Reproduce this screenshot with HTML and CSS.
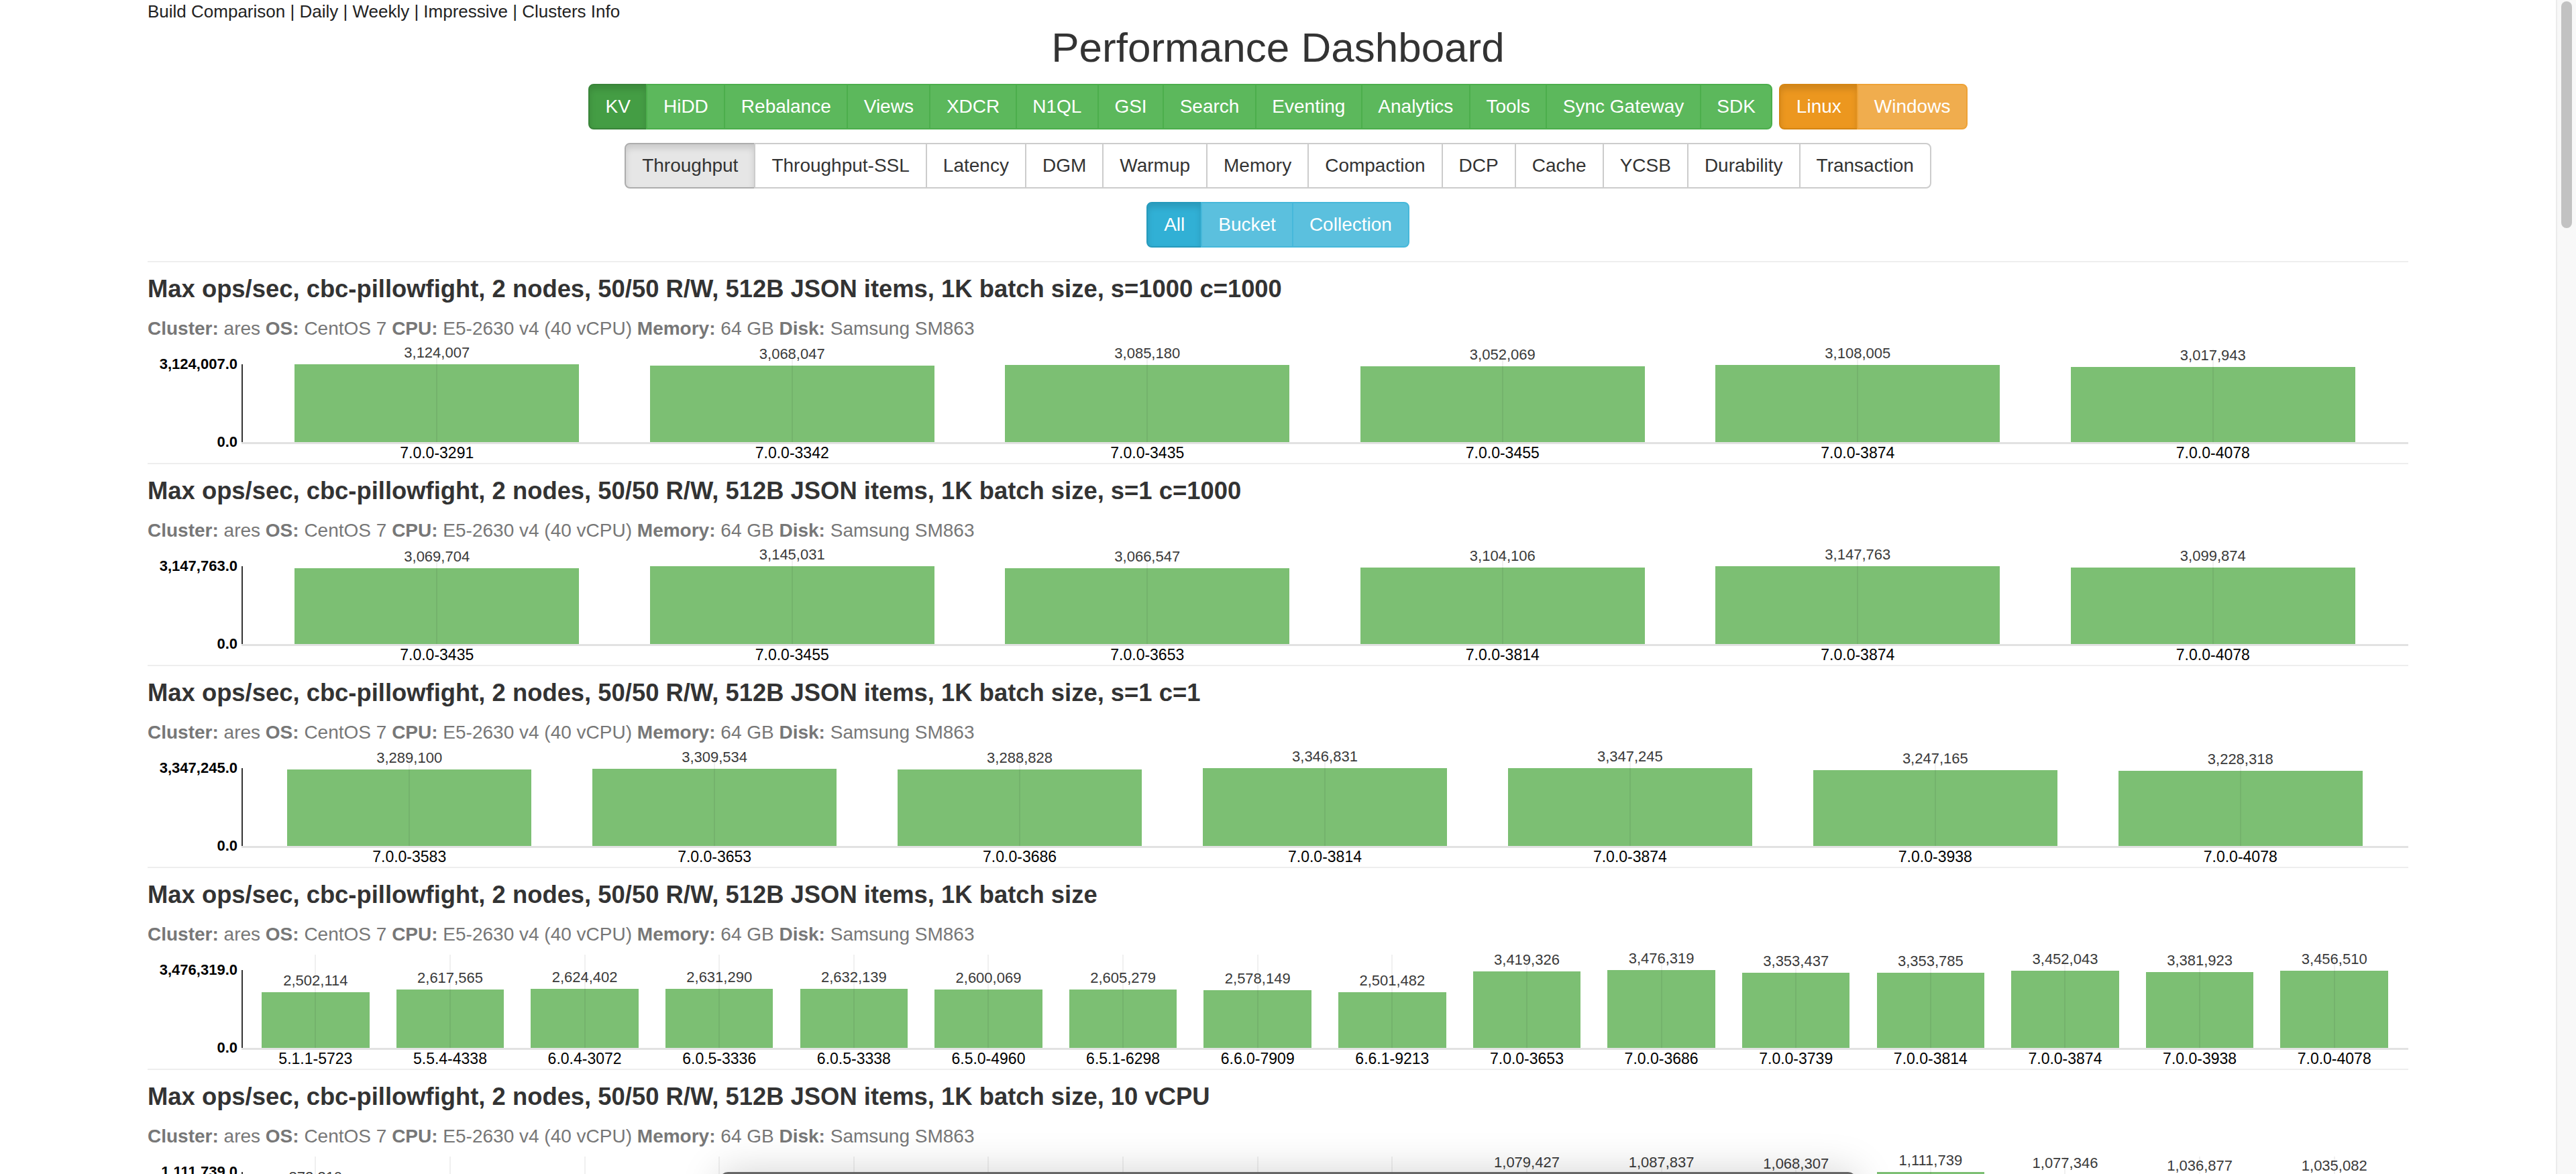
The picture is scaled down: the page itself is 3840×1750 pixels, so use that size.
FILE: index.html
```html
<!DOCTYPE html>
<html lang="en">
<head>
<meta charset="utf-8">
<title>Performance Dashboard</title>
<link rel="stylesheet" href="styles.css">
</head>
<body>
<div class="app">
  <main class="page">
    <div class="toplinks">Build Comparison | Daily | Weekly | Impressive | Clusters Info</div>
    <h1 class="title">Performance Dashboard</h1>

    <div class="toolbar">
      <div class="btn-group success">
        <span class="btn active">KV</span><span class="btn">HiDD</span><span class="btn">Rebalance</span><span class="btn">Views</span><span class="btn">XDCR</span><span class="btn">N1QL</span><span class="btn">GSI</span><span class="btn">Search</span><span class="btn">Eventing</span><span class="btn">Analytics</span><span class="btn">Tools</span><span class="btn">Sync Gateway</span><span class="btn">SDK</span>
      </div>
      <div class="btn-group warning">
        <span class="btn active">Linux</span><span class="btn">Windows</span>
      </div>
    </div>

    <div class="toolbar">
      <div class="btn-group default">
        <span class="btn active">Throughput</span><span class="btn">Throughput-SSL</span><span class="btn">Latency</span><span class="btn">DGM</span><span class="btn">Warmup</span><span class="btn">Memory</span><span class="btn">Compaction</span><span class="btn">DCP</span><span class="btn">Cache</span><span class="btn">YCSB</span><span class="btn">Durability</span><span class="btn">Transaction</span>
      </div>
    </div>

    <div class="toolbar">
      <div class="btn-group info">
        <span class="btn active">All</span><span class="btn">Bucket</span><span class="btn">Collection</span>
      </div>
    </div>

    <section class="panel">
      <h4 class="panel-title">Max ops/sec, cbc-pillowfight, 2 nodes, 50/50 R/W, 512B JSON items, 1K batch size, s=1000 c=1000</h4>
      <div class="meta"><b>Cluster:</b> ares <b>OS:</b> CentOS 7 <b>CPU:</b> E5-2630 v4 (40 vCPU) <b>Memory:</b> 64 GB <b>Disk:</b> Samsung SM863</div>
      <div class="chart" style="--max:3124007">
        <div class="yaxis"><span>3,124,007.0</span><span>0.0</span></div>
        <div class="plot">
          <div class="col"><div class="stack"><span class="val">3,124,007</span><div class="bar" style="--v:3124007"></div></div><div class="xl">7.0.0-3291</div></div>
          <div class="col"><div class="stack"><span class="val">3,068,047</span><div class="bar" style="--v:3068047"></div></div><div class="xl">7.0.0-3342</div></div>
          <div class="col"><div class="stack"><span class="val">3,085,180</span><div class="bar" style="--v:3085180"></div></div><div class="xl">7.0.0-3435</div></div>
          <div class="col"><div class="stack"><span class="val">3,052,069</span><div class="bar" style="--v:3052069"></div></div><div class="xl">7.0.0-3455</div></div>
          <div class="col"><div class="stack"><span class="val">3,108,005</span><div class="bar" style="--v:3108005"></div></div><div class="xl">7.0.0-3874</div></div>
          <div class="col"><div class="stack"><span class="val">3,017,943</span><div class="bar" style="--v:3017943"></div></div><div class="xl">7.0.0-4078</div></div>
        </div>
      </div>
    </section>

    <section class="panel">
      <h4 class="panel-title">Max ops/sec, cbc-pillowfight, 2 nodes, 50/50 R/W, 512B JSON items, 1K batch size, s=1 c=1000</h4>
      <div class="meta"><b>Cluster:</b> ares <b>OS:</b> CentOS 7 <b>CPU:</b> E5-2630 v4 (40 vCPU) <b>Memory:</b> 64 GB <b>Disk:</b> Samsung SM863</div>
      <div class="chart" style="--max:3147763">
        <div class="yaxis"><span>3,147,763.0</span><span>0.0</span></div>
        <div class="plot">
          <div class="col"><div class="stack"><span class="val">3,069,704</span><div class="bar" style="--v:3069704"></div></div><div class="xl">7.0.0-3435</div></div>
          <div class="col"><div class="stack"><span class="val">3,145,031</span><div class="bar" style="--v:3145031"></div></div><div class="xl">7.0.0-3455</div></div>
          <div class="col"><div class="stack"><span class="val">3,066,547</span><div class="bar" style="--v:3066547"></div></div><div class="xl">7.0.0-3653</div></div>
          <div class="col"><div class="stack"><span class="val">3,104,106</span><div class="bar" style="--v:3104106"></div></div><div class="xl">7.0.0-3814</div></div>
          <div class="col"><div class="stack"><span class="val">3,147,763</span><div class="bar" style="--v:3147763"></div></div><div class="xl">7.0.0-3874</div></div>
          <div class="col"><div class="stack"><span class="val">3,099,874</span><div class="bar" style="--v:3099874"></div></div><div class="xl">7.0.0-4078</div></div>
        </div>
      </div>
    </section>

    <section class="panel">
      <h4 class="panel-title">Max ops/sec, cbc-pillowfight, 2 nodes, 50/50 R/W, 512B JSON items, 1K batch size, s=1 c=1</h4>
      <div class="meta"><b>Cluster:</b> ares <b>OS:</b> CentOS 7 <b>CPU:</b> E5-2630 v4 (40 vCPU) <b>Memory:</b> 64 GB <b>Disk:</b> Samsung SM863</div>
      <div class="chart" style="--max:3347245">
        <div class="yaxis"><span>3,347,245.0</span><span>0.0</span></div>
        <div class="plot">
          <div class="col"><div class="stack"><span class="val">3,289,100</span><div class="bar" style="--v:3289100"></div></div><div class="xl">7.0.0-3583</div></div>
          <div class="col"><div class="stack"><span class="val">3,309,534</span><div class="bar" style="--v:3309534"></div></div><div class="xl">7.0.0-3653</div></div>
          <div class="col"><div class="stack"><span class="val">3,288,828</span><div class="bar" style="--v:3288828"></div></div><div class="xl">7.0.0-3686</div></div>
          <div class="col"><div class="stack"><span class="val">3,346,831</span><div class="bar" style="--v:3346831"></div></div><div class="xl">7.0.0-3814</div></div>
          <div class="col"><div class="stack"><span class="val">3,347,245</span><div class="bar" style="--v:3347245"></div></div><div class="xl">7.0.0-3874</div></div>
          <div class="col"><div class="stack"><span class="val">3,247,165</span><div class="bar" style="--v:3247165"></div></div><div class="xl">7.0.0-3938</div></div>
          <div class="col"><div class="stack"><span class="val">3,228,318</span><div class="bar" style="--v:3228318"></div></div><div class="xl">7.0.0-4078</div></div>
        </div>
      </div>
    </section>

    <section class="panel">
      <h4 class="panel-title">Max ops/sec, cbc-pillowfight, 2 nodes, 50/50 R/W, 512B JSON items, 1K batch size</h4>
      <div class="meta"><b>Cluster:</b> ares <b>OS:</b> CentOS 7 <b>CPU:</b> E5-2630 v4 (40 vCPU) <b>Memory:</b> 64 GB <b>Disk:</b> Samsung SM863</div>
      <div class="chart" style="--max:3476319">
        <div class="yaxis"><span>3,476,319.0</span><span>0.0</span></div>
        <div class="plot">
          <div class="col"><div class="stack"><span class="val">2,502,114</span><div class="bar" style="--v:2502114"></div></div><div class="xl">5.1.1-5723</div></div>
          <div class="col"><div class="stack"><span class="val">2,617,565</span><div class="bar" style="--v:2617565"></div></div><div class="xl">5.5.4-4338</div></div>
          <div class="col"><div class="stack"><span class="val">2,624,402</span><div class="bar" style="--v:2624402"></div></div><div class="xl">6.0.4-3072</div></div>
          <div class="col"><div class="stack"><span class="val">2,631,290</span><div class="bar" style="--v:2631290"></div></div><div class="xl">6.0.5-3336</div></div>
          <div class="col"><div class="stack"><span class="val">2,632,139</span><div class="bar" style="--v:2632139"></div></div><div class="xl">6.0.5-3338</div></div>
          <div class="col"><div class="stack"><span class="val">2,600,069</span><div class="bar" style="--v:2600069"></div></div><div class="xl">6.5.0-4960</div></div>
          <div class="col"><div class="stack"><span class="val">2,605,279</span><div class="bar" style="--v:2605279"></div></div><div class="xl">6.5.1-6298</div></div>
          <div class="col"><div class="stack"><span class="val">2,578,149</span><div class="bar" style="--v:2578149"></div></div><div class="xl">6.6.0-7909</div></div>
          <div class="col"><div class="stack"><span class="val">2,501,482</span><div class="bar" style="--v:2501482"></div></div><div class="xl">6.6.1-9213</div></div>
          <div class="col"><div class="stack"><span class="val">3,419,326</span><div class="bar" style="--v:3419326"></div></div><div class="xl">7.0.0-3653</div></div>
          <div class="col"><div class="stack"><span class="val">3,476,319</span><div class="bar" style="--v:3476319"></div></div><div class="xl">7.0.0-3686</div></div>
          <div class="col"><div class="stack"><span class="val">3,353,437</span><div class="bar" style="--v:3353437"></div></div><div class="xl">7.0.0-3739</div></div>
          <div class="col"><div class="stack"><span class="val">3,353,785</span><div class="bar" style="--v:3353785"></div></div><div class="xl">7.0.0-3814</div></div>
          <div class="col"><div class="stack"><span class="val">3,452,043</span><div class="bar" style="--v:3452043"></div></div><div class="xl">7.0.0-3874</div></div>
          <div class="col"><div class="stack"><span class="val">3,381,923</span><div class="bar" style="--v:3381923"></div></div><div class="xl">7.0.0-3938</div></div>
          <div class="col"><div class="stack"><span class="val">3,456,510</span><div class="bar" style="--v:3456510"></div></div><div class="xl">7.0.0-4078</div></div>
        </div>
      </div>
    </section>

    <section class="panel">
      <h4 class="panel-title">Max ops/sec, cbc-pillowfight, 2 nodes, 50/50 R/W, 512B JSON items, 1K batch size, 10 vCPU</h4>
      <div class="meta"><b>Cluster:</b> ares <b>OS:</b> CentOS 7 <b>CPU:</b> E5-2630 v4 (40 vCPU) <b>Memory:</b> 64 GB <b>Disk:</b> Samsung SM863</div>
      <div class="chart" style="--max:1111739">
        <div class="yaxis"><span>1,111,739.0</span><span>0.0</span></div>
        <div class="plot">
          <div class="col"><div class="stack"><span class="val">872,310</span><div class="bar" style="--v:872310"></div></div><div class="xl">5.1.1-5723</div></div>
          <div class="col"><div class="stack"><span class="val">801,245</span><div class="bar" style="--v:801245"></div></div><div class="xl">5.5.4-4338</div></div>
          <div class="col"><div class="stack"><span class="val">812,604</span><div class="bar" style="--v:812604"></div></div><div class="xl">6.0.4-3072</div></div>
          <div class="col"><div class="stack"><span class="val">806,377</span><div class="bar" style="--v:806377"></div></div><div class="xl">6.0.5-3336</div></div>
          <div class="col"><div class="stack"><span class="val">815,902</span><div class="bar" style="--v:815902"></div></div><div class="xl">6.0.5-3338</div></div>
          <div class="col"><div class="stack"><span class="val">798,113</span><div class="bar" style="--v:798113"></div></div><div class="xl">6.5.0-4960</div></div>
          <div class="col"><div class="stack"><span class="val">804,556</span><div class="bar" style="--v:804556"></div></div><div class="xl">6.5.1-6298</div></div>
          <div class="col"><div class="stack"><span class="val">790,218</span><div class="bar" style="--v:790218"></div></div><div class="xl">6.6.0-7909</div></div>
          <div class="col"><div class="stack"><span class="val">781,930</span><div class="bar" style="--v:781930"></div></div><div class="xl">6.6.1-9213</div></div>
          <div class="col"><div class="stack"><span class="val">1,079,427</span><div class="bar" style="--v:1079427"></div></div><div class="xl">7.0.0-3653</div></div>
          <div class="col"><div class="stack"><span class="val">1,087,837</span><div class="bar" style="--v:1087837"></div></div><div class="xl">7.0.0-3686</div></div>
          <div class="col"><div class="stack"><span class="val">1,068,307</span><div class="bar" style="--v:1068307"></div></div><div class="xl">7.0.0-3739</div></div>
          <div class="col"><div class="stack"><span class="val">1,111,739</span><div class="bar" style="--v:1111739"></div></div><div class="xl">7.0.0-3814</div></div>
          <div class="col"><div class="stack"><span class="val">1,077,346</span><div class="bar" style="--v:1077346"></div></div><div class="xl">7.0.0-3874</div></div>
          <div class="col"><div class="stack"><span class="val">1,036,877</span><div class="bar" style="--v:1036877"></div></div><div class="xl">7.0.0-3938</div></div>
          <div class="col"><div class="stack"><span class="val">1,035,082</span><div class="bar" style="--v:1035082"></div></div><div class="xl">7.0.0-4078</div></div>
        </div>
      </div>
    </section>
  </main>
  <div class="scrollbar"><div class="thumb"></div></div>
  <div class="overlay"></div>
</div>
</body>
</html>
```

FILE: styles.css
```css
html, body {
  margin: 0;
  height: 1750px;
  overflow: hidden;
  background: #fff;
}

body {
  font-family: "Liberation Sans", Arial, Helvetica, sans-serif;
  font-size: 28px;
  line-height: 40px;
  color: #333;
}

.app {
  display: flex;
  height: 1750px;
  position: relative;
  overflow: hidden;
}

.page {
  flex: 1;
  min-width: 0;
  padding: 0 220px;
}

/* top links */
.toplinks {
  font-size: 26px;
  line-height: 34px;
  color: #222;
}

.title {
  margin: 3px 0 0;
  font-size: 62px;
  line-height: 68px;
  font-weight: 400;
  text-align: center;
  color: #333;
}

/* button toolbars */
.toolbar {
  display: flex;
  justify-content: center;
  gap: 10px;
  margin-top: 20px;
}

.btn-group {
  display: flex;
}

.btn {
  display: block;
  font-size: 28px;
  line-height: 40px;
  padding: 12px 23.5px;
  border: 2px solid transparent;
  margin-left: -2px;
  white-space: nowrap;
  color: #fff;
}

.btn:first-child {
  margin-left: 0;
  border-radius: 8px 0 0 8px;
}

.btn:last-child {
  border-radius: 0 8px 8px 0;
}

.btn.active {
  box-shadow: inset 0 6px 10px rgba(0, 0, 0, 0.125);
}

.success .btn { background: #5cb85c; border-color: #4cae4c; }
.success .btn.active { background: #449d44; border-color: #398439; }

.warning .btn { background: #f0ad4e; border-color: #eea236; }
.warning .btn.active { background: #ec971f; border-color: #d58512; }

.default .btn { background: #fff; border-color: #ccc; color: #333; padding: 12px 24px; }
.default .btn.active { background: #e6e6e6; border-color: #adadad; }

.info .btn { background: #5bc0de; border-color: #46b8da; padding: 12px 24px; }
.info .btn.active { background: #31b0d5; border-color: #269abc; }

/* chart panels */
.panel {
  margin-top: 20px;
  border-top: 2px solid #eee;
  padding: 20px 0 3px;
}

.panel + .panel {
  margin-top: 0;
}

.panel-title {
  margin: 0;
  font-size: 36.4px;
  line-height: 40px;
  font-weight: 700;
  color: #333;
}

.meta {
  margin-top: 19px;
  font-size: 28px;
  line-height: 40px;
  color: #777;
}

.meta b {
  font-weight: 700;
}

.chart {
  display: flex;
  margin-top: 10px;
}

.yaxis {
  width: 140px;
  height: 151px;
  box-sizing: border-box;
  padding: 11px 6px 0 0;
  display: flex;
  flex-direction: column;
  justify-content: space-between;
  align-items: flex-end;
  font-size: 22px;
  line-height: 24px;
  font-weight: 700;
  color: #000;
}

.plot {
  flex: 1;
  min-width: 0;
  display: flex;
  background:
    linear-gradient(#333, #333) 0 23px / 2px 116px no-repeat,
    linear-gradient(#e2e2e2, #e2e2e2) 0 139px / 100% 3px no-repeat;
}

.plot::before,
.plot::after {
  content: "";
  flex: 0.05 0 0;
}

.col {
  flex: 1 0 0;
  min-width: 0;
  display: flex;
  flex-direction: column;
}

.stack {
  position: relative;
  height: 139px;
  display: flex;
  flex-direction: column;
  justify-content: flex-end;
  align-items: center;
}

.stack::after {
  content: "";
  position: absolute;
  top: 0;
  bottom: 0;
  left: calc(50% - 1px);
  width: 2px;
  background: rgba(0, 0, 0, 0.06);
}

.val {
  font-size: 22px;
  line-height: 24px;
  color: #3a3a3a;
  margin-bottom: 5px;
  white-space: nowrap;
}

.bar {
  width: 80%;
  flex: none;
  height: calc(116px * (var(--v) / var(--max)));
  background: #7cbf73;
}

.xl {
  margin-top: 4px;
  font-size: 23px;
  line-height: 24px;
  text-align: center;
  color: #000;
  white-space: nowrap;
}

/* browser scrollbar */
.scrollbar {
  width: 30px;
  flex: none;
  box-sizing: border-box;
  background: #f8f8f8;
  border-left: 2px solid #ececec;
  padding: 2px 6px 0;
}

.thumb {
  height: 338px;
  border-radius: 8px;
  background: #c2c2c2;
}

/* floating window edge at the bottom */
.overlay {
  position: absolute;
  left: 1073px;
  top: 1747px;
  width: 1694px;
  height: 60px;
  background: #fff;
  border-top: 3px solid #666;
  border-radius: 12px 12px 0 0;
  box-shadow: 0 0 60px rgba(0, 0, 0, 0.18);
}
```
